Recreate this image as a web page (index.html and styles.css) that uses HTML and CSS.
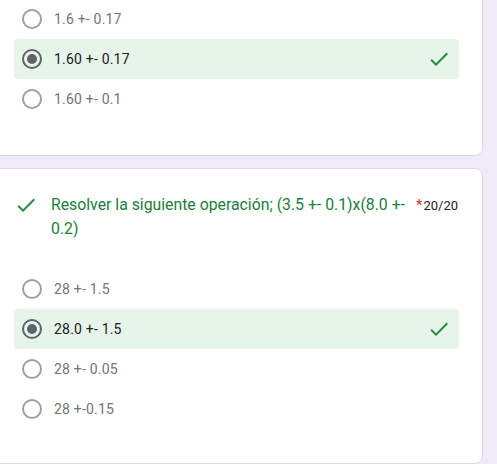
FILE: index.html
```html
<!DOCTYPE html>
<html lang="es">
<head>
<meta charset="utf-8">
<title>Formulario</title>
<link rel="stylesheet" href="styles.css">
</head>
<body>
<div class="wrap">
  <div class="card card-first">
    <div class="option">
      <span class="radio"></span>
      <span class="label">1.6 +- 0.17</span>
    </div>
    <div class="option correct">
      <span class="radio checked"></span>
      <span class="label">1.60 +- 0.17</span>
      <svg class="ok" width="24" height="24" viewBox="0 0 24 24"><path d="M9 16.17L4.83 12l-1.42 1.41L9 19 21 7l-1.41-1.41z"/></svg>
    </div>
    <div class="option">
      <span class="radio"></span>
      <span class="label">1.60 +- 0.1</span>
    </div>
  </div>

  <div class="card card-second">
    <div class="question">
      <svg class="qok" width="24" height="24" viewBox="0 0 24 24"><path d="M9 16.17L4.83 12l-1.42 1.41L9 19 21 7l-1.41-1.41z"/></svg>
      <div class="qtitle">Resolver la siguiente operación; (3.5 +- 0.1)x(8.0 +- 0.2)</div>
      <div class="points"><span class="req">*</span>20/20</div>
    </div>
    <div class="options">
      <div class="option">
        <span class="radio"></span>
        <span class="label">28 +- 1.5</span>
      </div>
      <div class="option correct">
        <span class="radio checked"></span>
        <span class="label">28.0 +- 1.5</span>
        <svg class="ok" width="24" height="24" viewBox="0 0 24 24"><path d="M9 16.17L4.83 12l-1.42 1.41L9 19 21 7l-1.41-1.41z"/></svg>
      </div>
      <div class="option">
        <span class="radio"></span>
        <span class="label">28 +- 0.05</span>
      </div>
      <div class="option">
        <span class="radio"></span>
        <span class="label">28 +-0.15</span>
      </div>
    </div>
  </div>
</div>
</body>
</html>
```

FILE: styles.css
```css
html, body {
  margin: 0;
  padding: 0;
  background: #f0ebf8;
  font-family: Roboto, "Liberation Sans", Arial, sans-serif;
  overflow: hidden;
}

.wrap {
  margin-left: -20px;
  width: 503px;
  display: flex;
  flex-direction: column;
  gap: 12px;
}

.card {
  background: #ffffff;
  border: 1px solid #dadce0;
  border-radius: 8px;
  box-sizing: border-box;
}

.card-first {
  margin-top: -22px;
  padding: 20px 0 36px 0;
}

.card-second {
  padding: 24px 0 34px 0;
}

.option {
  display: flex;
  align-items: center;
  height: 40px;
  margin: 0 23px 0 33px;
  padding: 0 8px;
  border-radius: 4px;
  gap: 12px;
}

.option.correct {
  background: #e6f4ea;
}

.radio {
  width: 20px;
  height: 20px;
  box-sizing: border-box;
  border: 2px solid #9aa0a6;
  border-radius: 50%;
  flex: none;
  display: flex;
  align-items: center;
  justify-content: center;
}

.radio.checked {
  border-color: #5f6368;
}

.radio.checked::after {
  content: "";
  width: 10px;
  height: 10px;
  border-radius: 50%;
  background: #5f6368;
}

.label {
  flex: 1;
  font-size: 14px;
  color: #70757a;
  letter-spacing: 0.2px;
}

.correct .label {
  color: #202124;
}

.ok {
  fill: #1e8e3e;
  flex: none;
}

.question {
  display: flex;
  align-items: flex-start;
  margin: 0 24px 0 33px;
}

.qok {
  fill: #1e8e3e;
  flex: none;
  margin-right: 13px;
}

.qtitle {
  flex: 1;
  font-size: 15.8px;
  line-height: 24px;
  color: #188038;
}

.points {
  flex: none;
  font-size: 13px;
  line-height: 24px;
  color: #202124;
  margin-left: 4px;
}

.req {
  color: #d93025;
  font-size: 15px;
  margin-right: 1px;
}

.options {
  margin-top: 28px;
}
```
